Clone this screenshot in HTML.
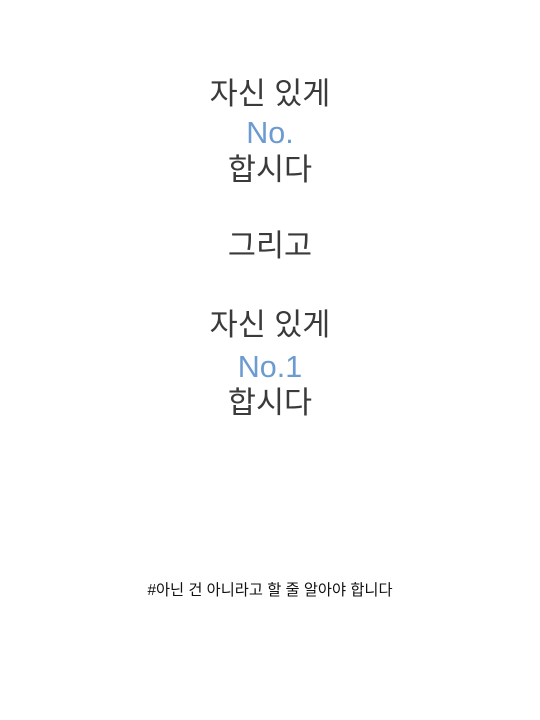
<!DOCTYPE html>
<html><head><meta charset="utf-8"><style>
html,body{margin:0;padding:0;background:#fff;width:540px;height:720px;overflow:hidden}
.l{position:absolute;left:0;width:540px;text-align:center;font-family:"Liberation Sans","Noto Sans CJK KR",sans-serif;font-size:30.5px;line-height:38px;color:#3a3a3a}
.b{color:#6b9bd1}
.s{font-size:15.3px;line-height:20px;color:#111}
</style></head><body>
<div class="l" style="top:75px">자신 있게</div>
<div class="l b" style="top:114px">No.</div>
<div class="l" style="top:151px">합시다</div>
<div class="l" style="top:227px">그리고</div>
<div class="l" style="top:306px">자신 있게</div>
<div class="l b" style="top:348px">No.1</div>
<div class="l" style="top:384px">합시다</div>
<div class="l s" style="top:581px">#아닌 건 아니라고 할 줄 알아야 합니다</div>
</body></html>
